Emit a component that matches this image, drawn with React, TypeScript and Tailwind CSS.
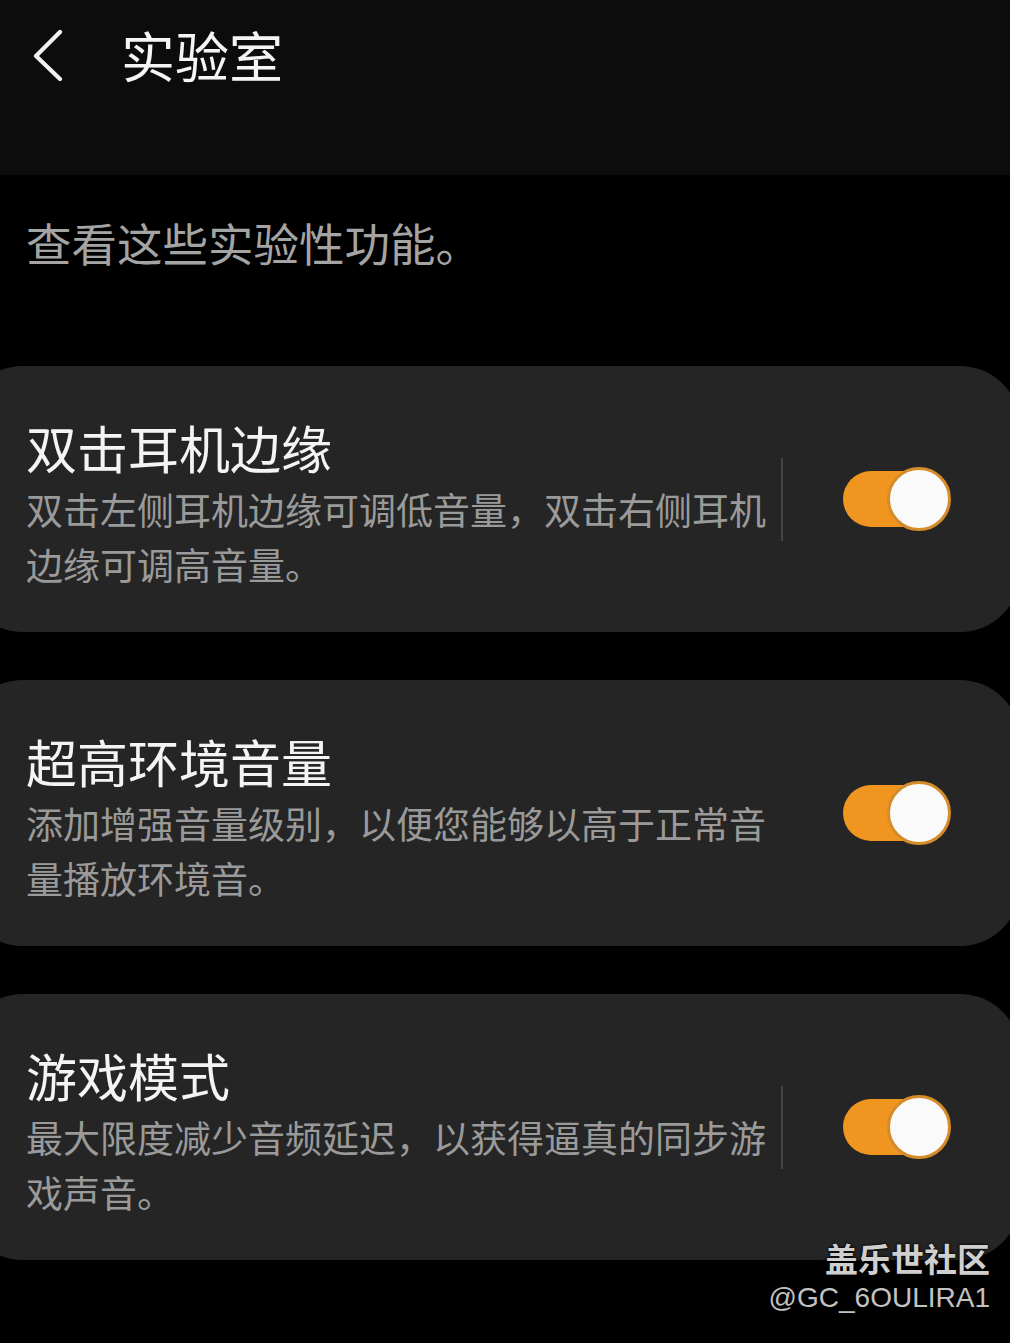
import React from "react";

const cards = [
  {
    title: "双击耳机边缘",
    desc: "双击左侧耳机边缘可调低音量，双击右侧耳机边缘可调高音量。",
    divider: true,
  },
  {
    title: "超高环境音量",
    desc: "添加增强音量级别，以便您能够以高于正常音量播放环境音。",
    divider: false,
  },
  {
    title: "游戏模式",
    desc: "最大限度减少音频延迟，以获得逼真的同步游戏声音。",
    divider: true,
  },
];

function Toggle() {
  return (
    <div className="relative w-[108px] h-[64px] shrink-0">
      <div className="absolute left-0 top-[4px] h-[56px] w-[96px] rounded-full bg-[#f0951f]" />
      <div className="absolute right-0 top-0 h-[64px] w-[64px] rounded-full bg-[#fafafa] border-[3px] border-[#d68b2a]" />
    </div>
  );
}

export default function App() {
  return (
    <div className="relative w-[1010px] h-[1343px] overflow-hidden bg-black font-['Noto_Sans_CJK_SC',sans-serif]">
      <header className="h-[175px] bg-[#0c0c0c]">
        <div className="flex h-[110px] items-center">
          <svg
            className="ml-[31px] shrink-0"
            width="34"
            height="52"
            viewBox="0 0 34 52"
            fill="none"
          >
            <polyline
              points="29,3 5,27 29,50"
              stroke="#f2f2f2"
              strokeWidth="4.2"
              strokeLinecap="round"
              strokeLinejoin="round"
            />
          </svg>
          <h1 className="ml-[56px] text-[54px] leading-none text-[#f4f4f4]">实验室</h1>
        </div>
      </header>

      <p className="mt-[39px] pl-[26px] text-[45.5px] leading-[56px] text-[#a4a4a4]">
        查看这些实验性功能。
      </p>

      <div className="mt-[96px] flex flex-col gap-[48px]">
        {cards.map((c) => (
          <div
            key={c.title}
            className="ml-[-37px] flex h-[266px] w-[1057px] items-center rounded-[60px] bg-[#252525] pl-[63px]"
          >
            <div className="w-[742px] shrink-0 pt-[10px]">
              <div className="text-[51px] leading-[60px] text-[#f4f4f4]">{c.title}</div>
              <div className="mt-[5px] text-[37px] leading-[55px] text-[#9a9a9a]">{c.desc}</div>
            </div>
            <div
              className={
                c.divider
                  ? "ml-[13px] h-[83px] w-[2px] shrink-0 bg-[#444444]"
                  : "ml-[13px] h-[83px] w-[2px] shrink-0"
              }
            />
            <div className="ml-[60px]">
              <Toggle />
            </div>
          </div>
        ))}
      </div>

      <div className="absolute right-[20px] top-[1236px] flex flex-col items-end [text-shadow:0_0_3px_#000,0_0_2px_#000]">
        <div className="text-[33px] font-bold leading-[44px] text-[#cfcfcf]">盖乐世社区</div>
        <div className="font-['Liberation_Sans',sans-serif] text-[28px] leading-[36px] text-[#c2c2c2]">
          @GC_6OULIRA1
        </div>
      </div>
    </div>
  );
}
